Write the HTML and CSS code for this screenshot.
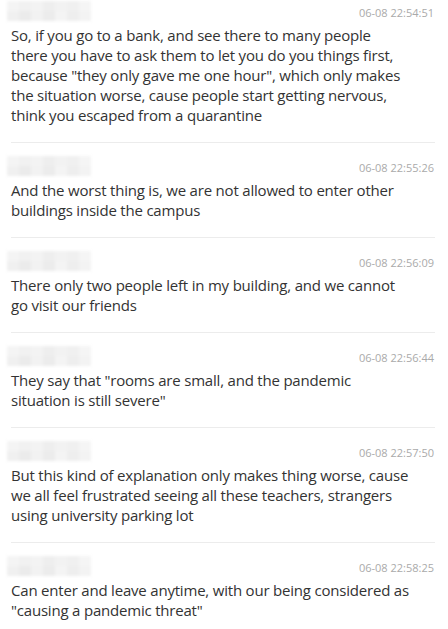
FILE: index.html
```html
<!DOCTYPE html>
<html>
<head>
<meta charset="utf-8">
<link rel="stylesheet" href="styles.css">
</head>
<body>
<div class="list">
  <div class="item first">
    <div class="head"><div class="name"><span></span><span></span><span></span><span></span><span></span><span></span><span></span><span></span><span></span><span></span><span></span><span></span><span></span><span></span></div><div class="time">06-08 22:54:51</div></div>
    <div class="text">So, if you go to a bank, and see there to many people<br>there you have to ask them to let you do you things first, because "they only gave me one hour", which only makes the situation worse, cause people start getting nervous, think you escaped from a quarantine</div>
  </div>
  <div class="item">
    <div class="head"><div class="name"><span></span><span></span><span></span><span></span><span></span><span></span><span></span><span></span><span></span><span></span><span></span><span></span><span></span><span></span></div><div class="time">06-08 22:55:26</div></div>
    <div class="text">And the worst thing is, we are not allowed to enter other buildings inside the campus</div>
  </div>
  <div class="item">
    <div class="head"><div class="name"><span></span><span></span><span></span><span></span><span></span><span></span><span></span><span></span><span></span><span></span><span></span><span></span><span></span><span></span></div><div class="time">06-08 22:56:09</div></div>
    <div class="text">There only two people left in my building, and we cannot go visit our friends</div>
  </div>
  <div class="item">
    <div class="head"><div class="name"><span></span><span></span><span></span><span></span><span></span><span></span><span></span><span></span><span></span><span></span><span></span><span></span><span></span><span></span></div><div class="time">06-08 22:56:44</div></div>
    <div class="text">They say that "rooms are small, and the pandemic situation is still severe"</div>
  </div>
  <div class="item">
    <div class="head"><div class="name"><span></span><span></span><span></span><span></span><span></span><span></span><span></span><span></span><span></span><span></span><span></span><span></span><span></span><span></span></div><div class="time">06-08 22:57:50</div></div>
    <div class="text">But this kind of explanation only makes thing worse, cause we all feel frustrated seeing all these teachers, strangers using university parking lot</div>
  </div>
  <div class="item">
    <div class="head"><div class="name"><span></span><span></span><span></span><span></span><span></span><span></span><span></span><span></span><span></span><span></span><span></span><span></span><span></span><span></span></div><div class="time">06-08 22:58:25</div></div>
    <div class="text">Can enter and leave anytime, with our being considered as "causing a pandemic threat"</div>
  </div>
</div>
</body>
</html>
```
FILE: styles.css
```css
html, body {
  margin: 0;
  padding: 0;
  background: #fff;
}
body {
  font-family: "Open Sans", "Noto Sans", sans-serif;
  color: #333;
  overflow: hidden;
}
.list {
  padding: 0 13px 0 11px;
}
.item {
  padding: 13px 0 17px;
  border-bottom: 1px solid #ececec;
}
.item.first {
  padding-top: 1px;
}
.item:last-child {
  border-bottom: none;
}
.head {
  display: flex;
  justify-content: space-between;
  align-items: center;
  height: 20px;
  margin-bottom: 4px;
}
.name {
  margin-left: -4px;
  width: 84px;
  height: 20px;
  display: grid;
  grid-template-columns: repeat(7, 12px);
  grid-template-rows: repeat(2, 10px);
  filter: blur(1.5px);
}
.name span:nth-child(1) { background: #f4f4f4; }
.name span:nth-child(2) { background: #f1f1f1; }
.name span:nth-child(3) { background: #f3f3f3; }
.name span:nth-child(4) { background: #eeeeee; }
.name span:nth-child(5) { background: #f2f2f2; }
.name span:nth-child(6) { background: #f0f0f0; }
.name span:nth-child(7) { background: #f5f5f5; }
.name span:nth-child(8) { background: #f0f0f0; }
.name span:nth-child(9) { background: #ebebeb; }
.name span:nth-child(10) { background: #f2f2f2; }
.name span:nth-child(11) { background: #ececec; }
.name span:nth-child(12) { background: #f4f4f4; }
.name span:nth-child(13) { background: #eeeeee; }
.name span:nth-child(14) { background: #f3f3f3; }
.time {
  font-size: 11px;
  color: #aaa;
  padding-right: 1px;
  padding-top: 2px;
}
.text {
  font-size: 15px;
  letter-spacing: -0.2px;
  line-height: 20px;
  padding-right: 22px;
}
```
